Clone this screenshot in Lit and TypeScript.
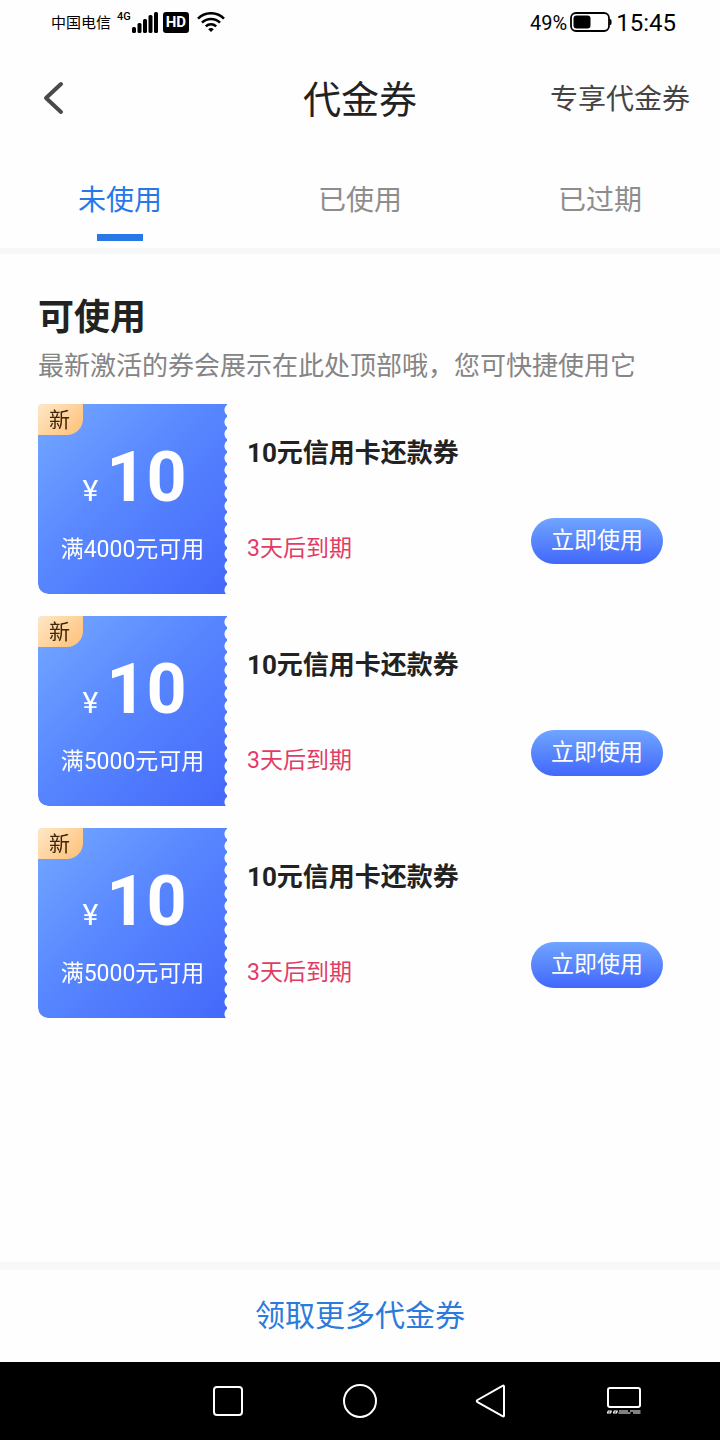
import { LitElement, html, css, svg } from "lit";
import { customElement, property, state } from "lit/decorators.js";

interface Coupon {
  amount: number;
  threshold: number;
  title: string;
  expiry: string;
}

const fontStack = css`Roboto, "Noto Sans CJK SC", sans-serif`;

@customElement("status-bar")
class StatusBar extends LitElement {
  static styles = css`
    :host {
      display: flex;
      align-items: center;
      justify-content: space-between;
      height: 44px;
      padding: 0 44px 0 51px;
      color: #000;
      font-family: ${fontStack};
    }
    .side {
      display: flex;
      align-items: center;
    }
    .carrier {
      padding-top: 2px;
      font-size: 15px;
      line-height: 20px;
    }
    .net {
      align-self: flex-start;
      margin-left: 6px;
      font-size: 11px;
      line-height: 12px;
      font-weight: 500;
    }
    .hd {
      margin: 0 8px 0 4px;
      padding: 0 3px;
      border-radius: 3px;
      background: #000;
      color: #fff;
      font-size: 15px;
      line-height: 21px;
      font-weight: 700;
    }
    .percent {
      padding-top: 2px;
      font-size: 20px;
      line-height: 24px;
    }
    .battery {
      margin: 0 4px 0 3px;
    }
    .time {
      padding-top: 2px;
      font-size: 24px;
      line-height: 28px;
    }
    svg {
      display: block;
    }
  `;

  render() {
    return html`
      <div class="side">
        <span class="carrier">中国电信</span>
        <span class="net">4G</span>
        <svg width="28" height="22" viewBox="0 0 28 22" aria-hidden="true">
          ${[6, 10, 14, 18, 21].map(
            (h, i) => svg`<rect x=${1 + i * 5.5} y=${22 - h} width="4" height=${h} rx="1.5" />`
          )}
        </svg>
        <span class="hd">HD</span>
        <svg width="28" height="20" viewBox="0 0 28 20" fill="none" stroke="#000" stroke-width="2.6" aria-hidden="true">
          <path d="M1 6.600C8.400-.5 19.600-.5 27 6.600" />
          <path d="M5 10.600c5.200-4.800 12.800-4.800 18 0" />
          <path d="M8.800 14.400c3-2.800 7.400-2.800 10.400 0" />
          <path d="M14 20l-2.800-2.800c1.600-1.500 4-1.500 5.600 0z" fill="#000" stroke="none" />
        </svg>
      </div>
      <div class="side">
        <span class="percent">49%</span>
        <svg class="battery" width="42" height="20" viewBox="0 0 42 20" aria-hidden="true">
          <rect x="1" y="1" width="38" height="18" rx="5" fill="none" stroke="#000" stroke-width="1.8" />
          <rect x="3.5" y="3.5" width="17" height="13" rx="3" />
          <path d="M39.500 7h.5a1.500 1.500 0 0 1 1.500 1.500v3a1.500 1.500 0 0 1-1.500 1.500h-.5z" />
        </svg>
        <span class="time">15:45</span>
      </div>
    `;
  }
}

@customElement("coupon-card")
class CouponCard extends LitElement {
  @property({ attribute: false }) coupon!: Coupon;

  static styles = css`
    :host {
      display: flex;
      height: 190px;
      font-family: ${fontStack};
    }
    .ticket {
      position: relative;
      box-sizing: border-box;
      flex: none;
      width: 189px;
      padding-top: 38px;
      border-radius: 4px 0 0 10px;
      background: linear-gradient(135deg, #75a8ff 0%, #5887ff 45%, #4468fb 100%);
      color: #fff;
      text-align: center;
      mask:
        linear-gradient(#000 0 0) left / calc(100% - 3px) 100% no-repeat,
        radial-gradient(circle at 7px 50%, transparent 6px, #000 7px) right top / 3px 12px repeat-y;
    }
    .badge {
      position: absolute;
      top: 0;
      left: 0;
      padding: 2px 13px 0 11px;
      border-radius: 4px 0 16px 0;
      background: linear-gradient(135deg, #ffe8c8, #fdbf74);
      color: #3d2608;
      font-size: 21px;
      line-height: 29px;
    }
    .amount {
      display: flex;
      align-items: baseline;
      justify-content: center;
      gap: 8px;
      padding-left: 4px;
      font-size: 70px;
      line-height: 70px;
      font-weight: 700;
    }
    .currency {
      font-size: 30px;
      font-weight: 400;
    }
    .rule {
      margin-top: 10px;
      font-size: 23px;
      line-height: 28px;
    }
    .info {
      flex: 1;
      display: flex;
      flex-direction: column;
      justify-content: space-between;
      padding: 30px 19px 30px 20px;
    }
    .name {
      margin: 0;
      color: #222;
      font-size: 26px;
      line-height: 38px;
      font-weight: 700;
    }
    .action {
      display: flex;
      align-items: flex-end;
      justify-content: space-between;
    }
    .expiry {
      color: #e13c64;
      font-size: 23px;
      line-height: 30px;
    }
    .use {
      height: 46px;
      padding: 0 20px;
      border: 0;
      border-radius: 23px;
      background: linear-gradient(#70a5ff, #4267fb);
      color: #fff;
      font: 400 23px/44px ${fontStack};
      cursor: pointer;
    }
  `;

  render() {
    const { amount, threshold, title, expiry } = this.coupon;
    return html`
      <div class="ticket">
        <span class="badge">新</span>
        <div class="amount"><span class="currency">¥</span><span>${amount}</span></div>
        <div class="rule">满${threshold}元可用</div>
      </div>
      <div class="info">
        <h3 class="name">${title}</h3>
        <div class="action">
          <span class="expiry">${expiry}</span>
          <button class="use" type="button">立即使用</button>
        </div>
      </div>
    `;
  }
}

@customElement("nav-keys")
class NavKeys extends LitElement {
  static styles = css`
    :host {
      display: grid;
      grid-template-columns: repeat(4, 132px);
      justify-content: center;
      height: 78px;
      padding-left: 132px;
      background: #000;
    }
    button {
      display: grid;
      place-items: center;
      padding: 0;
      border: 0;
      background: none;
    }
    svg {
      fill: none;
      stroke: #fff;
      stroke-width: 2;
      stroke-linejoin: round;
    }
  `;

  render() {
    return html`
      <button type="button" aria-label="最近任务">
        <svg width="36" height="36" viewBox="0 0 36 36"><rect x="4" y="4" width="28" height="28" rx="3" /></svg>
      </button>
      <button type="button" aria-label="主屏幕">
        <svg width="36" height="36" viewBox="0 0 36 36"><circle cx="18" cy="18" r="16" /></svg>
      </button>
      <button type="button" aria-label="返回">
        <svg width="36" height="36" viewBox="0 0 36 36"><path d="M30 3.500v29q0 1.500-1.500.700L3.500 19.200q-1.500-1.200 0-2.200L28.500 2.800q1.500-.800 1.500.7z" /></svg>
      </button>
      <button type="button" aria-label="收起">
        <svg width="36" height="36" viewBox="0 0 36 36">
          <rect x="2" y="5" width="32" height="19" rx="2" />
          <path d="M1.500 30l.8-2h3l-.8 2zM7.500 30l.8-2h3l-.8 2zM13 28h9M12.500 30h12M24 28h10.500M27 30h7.500" stroke-width="1.200" />
        </svg>
      </button>
    `;
  }
}

@customElement("app-root")
class AppRoot extends LitElement {
  @state() private active = 0;

  private tabs = ["未使用", "已使用", "已过期"];

  private coupons: Coupon[] = [4000, 5000, 5000].map((threshold) => ({
    amount: 10,
    threshold,
    title: "10元信用卡还款券",
    expiry: "3天后到期",
  }));

  static styles = css`
    :host {
      display: flex;
      flex-direction: column;
      min-height: 100vh;
      background: #fefefe;
      color: #222;
      font-family: ${fontStack};
    }
    .header {
      display: grid;
      grid-template-columns: 1fr auto 1fr;
      align-items: center;
      height: 108px;
      padding: 0 30px;
    }
    .back {
      justify-self: start;
      display: grid;
      padding: 0;
      border: 0;
      background: none;
    }
    .title {
      margin: 0;
      padding-top: 4px;
      font-size: 38px;
      line-height: 48px;
      font-weight: 400;
    }
    .exclusive {
      justify-self: end;
      padding-top: 4px;
      color: #444;
      font-size: 28px;
      line-height: 40px;
      text-decoration: none;
    }
    .tabs {
      display: grid;
      grid-template-columns: repeat(3, 1fr);
      height: 96px;
      border-bottom: 6px solid #f6f7f8;
    }
    .tab {
      display: flex;
      flex-direction: column;
      align-items: center;
      gap: 13px;
      padding: 29px 0 0;
      border: 0;
      background: none;
      color: #8d8d8d;
      font: 400 28px/40px ${fontStack};
      cursor: pointer;
    }
    .tab.active {
      color: #2878e8;
    }
    .tab.active::after {
      content: "";
      width: 46px;
      height: 7px;
      background: #2878e8;
    }
    .content {
      flex: 1;
      padding: 40px 38px;
    }
    .heading {
      margin: 0;
      font-size: 36px;
      line-height: 48px;
      font-weight: 700;
    }
    .hint {
      margin: 6px 0 20px;
      color: #858585;
      font-size: 26px;
      line-height: 36px;
    }
    .list {
      display: grid;
      gap: 22px;
    }
    .more {
      border-top: 8px solid #f8f8f8;
      padding: 24px 0;
      color: #2b7bdd;
      font-size: 30px;
      line-height: 44px;
      text-align: center;
      text-decoration: none;
    }
  `;

  render() {
    return html`
      <status-bar></status-bar>
      <header class="header">
        <button class="back" type="button" aria-label="返回">
          <svg width="42" height="36" viewBox="-6 0 42 36" fill="none" stroke="#4a4a4a" stroke-width="4" stroke-linecap="round" stroke-linejoin="round">
            <path d="M25 4L10 18l15 14" />
          </svg>
        </button>
        <h1 class="title">代金券</h1>
        <a class="exclusive" href="#exclusive">专享代金券</a>
      </header>
      <nav class="tabs" role="tablist">
        ${this.tabs.map(
          (label, i) => html`<button
            class="tab ${i === this.active ? "active" : ""}"
            type="button"
            role="tab"
            aria-selected=${i === this.active}
            @click=${() => (this.active = i)}
          >${label}</button>`
        )}
      </nav>
      <main class="content">
        <h2 class="heading">可使用</h2>
        <p class="hint">最新激活的券会展示在此处顶部哦，您可快捷使用它</p>
        <div class="list">
          ${this.coupons.map((c) => html`<coupon-card .coupon=${c}></coupon-card>`)}
        </div>
      </main>
      <a class="more" href="#more">领取更多代金券</a>
      <nav-keys></nav-keys>
    `;
  }
}
